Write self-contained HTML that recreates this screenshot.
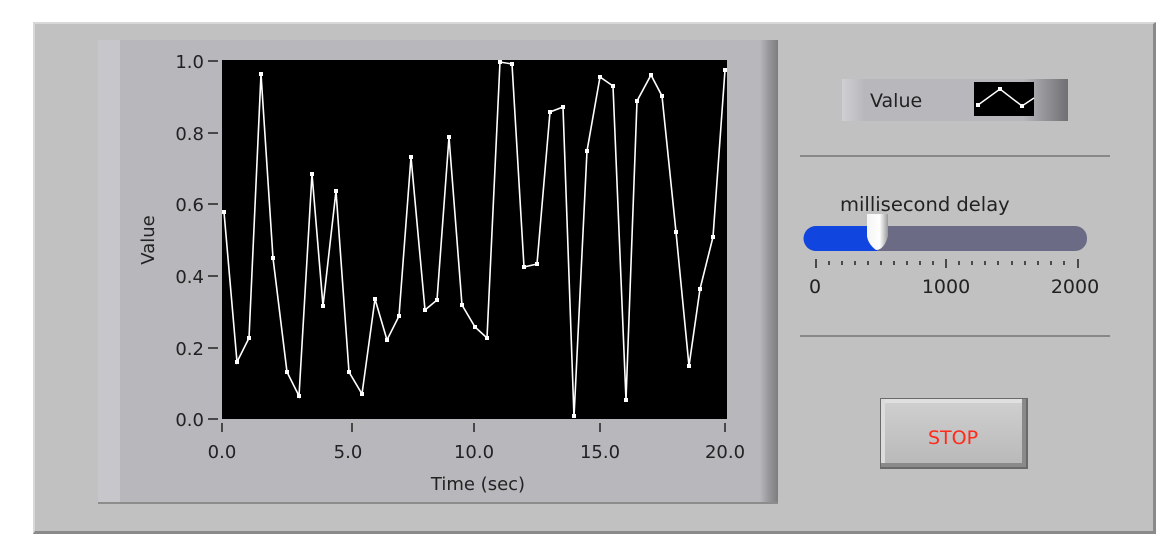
<!DOCTYPE html>
<html><head><style>
body{margin:0;width:1162px;height:538px;background:#fff;position:relative;overflow:hidden;font-family:"DejaVu Sans","Liberation Sans",sans-serif;}
.a{position:absolute}
</style></head><body>
<div class="a" style="left:33px;top:22px;width:1123px;height:512px;background:#c1c1c1;border-top:2px solid #d8d8d8;border-left:2px solid #d8d8d8;border-right:3px solid #8a8a8a;border-bottom:3px solid #8a8a8a;box-sizing:border-box;"></div>
<div class="a" style="left:98px;top:40px;width:680px;height:462px;background:linear-gradient(to right,#c7c7cb 0,#c7c7cb 22px,#b8b8bc 22px,#b8b8bc 662px,#9a9a9e 670px,#7d7d80 680px);box-shadow:0 2px 0 #8c8c8c;"></div>
<svg class="a" style="left:0;top:0" width="1162" height="538">
<rect x="222" y="60" width="505" height="359" fill="#000"/>
<g fill="#222" font-family="DejaVu Sans, Liberation Sans, sans-serif" font-size="18" text-anchor="end">
<text x="204" y="68">1.0</text><text x="204" y="140">0.8</text><text x="204" y="211">0.6</text><text x="204" y="283">0.4</text><text x="204" y="355">0.2</text><text x="204" y="426">0.0</text>
</g>
<g stroke="#222" stroke-width="1.5">
<line x1="208" y1="61" x2="218" y2="61"/><line x1="208" y1="133" x2="218" y2="133"/><line x1="208" y1="204" x2="218" y2="204"/><line x1="208" y1="276" x2="218" y2="276"/><line x1="208" y1="348" x2="218" y2="348"/><line x1="208" y1="419" x2="218" y2="419"/>
<line x1="222" y1="423" x2="222" y2="432"/><line x1="352" y1="423" x2="352" y2="432"/><line x1="474" y1="423" x2="474" y2="432"/><line x1="600" y1="423" x2="600" y2="432"/><line x1="725" y1="423" x2="725" y2="432"/>
</g>
<g fill="#222" font-family="DejaVu Sans, Liberation Sans, sans-serif" font-size="18" text-anchor="middle">
<text x="222" y="458">0.0</text><text x="348" y="458">5.0</text><text x="474" y="458">10.0</text><text x="600" y="458">15.0</text><text x="725" y="458">20.0</text>
<text x="478" y="490" font-size="18">Time (sec)</text>
<text transform="translate(154,240) rotate(-90)" font-size="18">Value</text>
</g>
<polyline fill="none" stroke="#fff" stroke-width="1.6" points="224,212 237,362 249,338 261,74 273,258 287,372 299,396 312,174 323,306 336,191 349,372 362,394 375,299 387,340 399,316 411,157 425,310 437,300 449,137 462,305 475,327 487,338 500,62 512,64 524,267 537,264 550,112 563,107 574,417 587,151 600,77 613,86 626,400 637,101 651,75 662,96 676,232 689,366 700,289 713,237 725,70"/>
<g fill="#fff">
<rect x="222" y="210" width="4" height="4"/><rect x="235" y="360" width="4" height="4"/><rect x="247" y="336" width="4" height="4"/><rect x="259" y="72" width="4" height="4"/><rect x="271" y="256" width="4" height="4"/><rect x="285" y="370" width="4" height="4"/><rect x="297" y="394" width="4" height="4"/><rect x="310" y="172" width="4" height="4"/><rect x="321" y="304" width="4" height="4"/><rect x="334" y="189" width="4" height="4"/><rect x="347" y="370" width="4" height="4"/><rect x="360" y="392" width="4" height="4"/><rect x="373" y="297" width="4" height="4"/><rect x="385" y="338" width="4" height="4"/><rect x="397" y="314" width="4" height="4"/><rect x="409" y="155" width="4" height="4"/><rect x="423" y="308" width="4" height="4"/><rect x="435" y="298" width="4" height="4"/><rect x="447" y="135" width="4" height="4"/><rect x="460" y="303" width="4" height="4"/><rect x="473" y="325" width="4" height="4"/><rect x="485" y="336" width="4" height="4"/><rect x="498" y="60" width="4" height="4"/><rect x="510" y="62" width="4" height="4"/><rect x="522" y="265" width="4" height="4"/><rect x="535" y="262" width="4" height="4"/><rect x="548" y="110" width="4" height="4"/><rect x="561" y="105" width="4" height="4"/><rect x="572" y="414" width="4" height="4"/><rect x="585" y="149" width="4" height="4"/><rect x="598" y="75" width="4" height="4"/><rect x="611" y="84" width="4" height="4"/><rect x="624" y="398" width="4" height="4"/><rect x="635" y="99" width="4" height="4"/><rect x="649" y="73" width="4" height="4"/><rect x="660" y="94" width="4" height="4"/><rect x="674" y="230" width="4" height="4"/><rect x="687" y="364" width="4" height="4"/><rect x="698" y="287" width="4" height="4"/><rect x="711" y="235" width="4" height="4"/><rect x="723" y="68" width="4" height="4"/>
</g>
<defs><linearGradient id="lg" x1="0" x2="1"><stop offset="0" stop-color="#d0d0d4"/><stop offset="0.1" stop-color="#b8b8bc"/><stop offset="0.8" stop-color="#b8b8bc"/><stop offset="1" stop-color="#707074"/></linearGradient>
<linearGradient id="kn" x1="0" x2="1"><stop offset="0" stop-color="#f4f4f4"/><stop offset="0.6" stop-color="#fff"/><stop offset="1" stop-color="#999"/></linearGradient>
<linearGradient id="bt" x1="0" y1="0" x2="0" y2="1"><stop offset="0" stop-color="#d0d0d0"/><stop offset="1" stop-color="#b8b8b8"/></linearGradient></defs>
<rect x="842" y="79" width="226" height="42" fill="url(#lg)"/>
<text x="870" y="107" font-family="DejaVu Sans, Liberation Sans, sans-serif" font-size="19" fill="#222">Value</text>
<rect x="974" y="82" width="60" height="34" fill="#000"/>
<polyline points="978,105 1000,89 1022,106 1034,98" fill="none" stroke="#fff" stroke-width="1.5"/>
<rect x="976" y="103" width="4" height="4" fill="#fff"/><rect x="998" y="87" width="4" height="4" fill="#fff"/><rect x="1020" y="104" width="4" height="4" fill="#fff"/>
<line x1="800" y1="156" x2="1110" y2="156" stroke="#888" stroke-width="2"/>
<line x1="800" y1="336" x2="1110" y2="336" stroke="#888" stroke-width="2"/>
<text x="840" y="211" font-family="DejaVu Sans, Liberation Sans, sans-serif" font-size="19.5" fill="#222">millisecond delay</text>
<rect x="804" y="226" width="283" height="25" rx="12" fill="#6b6b86"/>
<path d="M816,226 H877 V251 H816 A12.5,12.5 0 0 1 816,226 Z" fill="#1045e0"/>
<path d="M867,214 H888 V236 Q884,250 876,250 Q868,244 867,236 Z" fill="url(#kn)"/>
<g stroke="#222" stroke-width="1.5">
<line x1="816" y1="259" x2="816" y2="268"/><line x1="946" y1="259" x2="946" y2="268"/><line x1="1078" y1="259" x2="1078" y2="268"/>
<line x1="829" y1="261" x2="829" y2="265"/><line x1="842" y1="261" x2="842" y2="265"/><line x1="855" y1="261" x2="855" y2="265"/><line x1="868" y1="261" x2="868" y2="265"/><line x1="881" y1="261" x2="881" y2="265"/><line x1="894" y1="261" x2="894" y2="265"/><line x1="907" y1="261" x2="907" y2="265"/><line x1="920" y1="261" x2="920" y2="265"/><line x1="933" y1="261" x2="933" y2="265"/><line x1="959" y1="261" x2="959" y2="265"/><line x1="972" y1="261" x2="972" y2="265"/><line x1="985" y1="261" x2="985" y2="265"/><line x1="998" y1="261" x2="998" y2="265"/><line x1="1012" y1="261" x2="1012" y2="265"/><line x1="1025" y1="261" x2="1025" y2="265"/><line x1="1038" y1="261" x2="1038" y2="265"/><line x1="1051" y1="261" x2="1051" y2="265"/><line x1="1064" y1="261" x2="1064" y2="265"/>
</g>
<g fill="#222" font-family="DejaVu Sans, Liberation Sans, sans-serif" font-size="19" text-anchor="middle">
<text x="815" y="293">0</text><text x="946" y="293">1000</text><text x="1075" y="293">2000</text>
</g>
<rect x="880" y="398" width="148" height="71" fill="#6a6a6a"/>
<rect x="881" y="399" width="145" height="68" fill="url(#bt)"/>
<rect x="881" y="399" width="145" height="4" fill="#e0e0e0"/>
<rect x="881" y="399" width="4" height="68" fill="#dcdcdc"/>
<rect x="1022" y="399" width="4" height="68" fill="#8a8a8a"/>
<rect x="881" y="463" width="145" height="4" fill="#8a8a8a"/>
<text x="953" y="444" font-family="DejaVu Sans, Liberation Sans, sans-serif" font-size="19" fill="#ff2a1a" text-anchor="middle">STOP</text>
</svg>
</body></html>
